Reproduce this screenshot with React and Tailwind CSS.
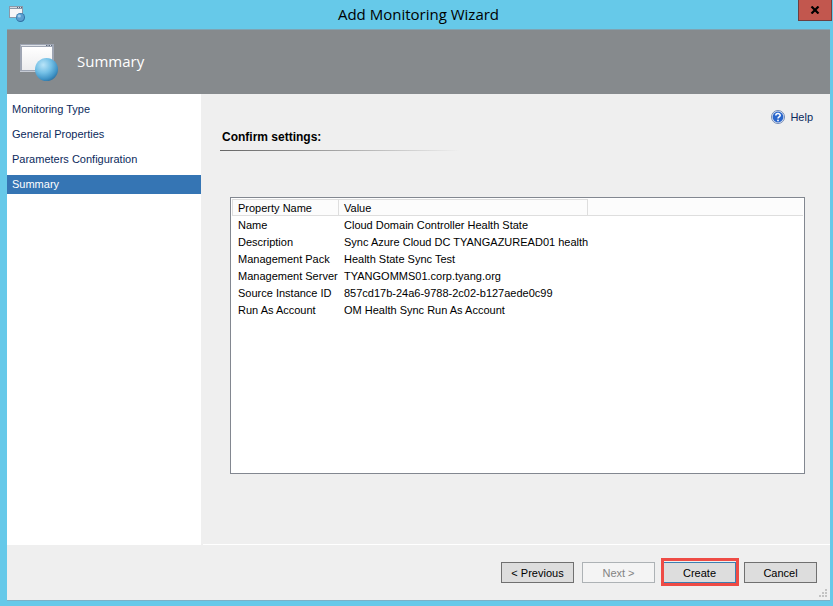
import React from "react";

const steps = ["Monitoring Type", "General Properties", "Parameters Configuration", "Summary"];

const settings = [
  ["Name", "Cloud Domain Controller Health State"],
  ["Description", "Sync Azure Cloud DC TYANGAZUREAD01 health"],
  ["Management Pack", "Health State Sync Test"],
  ["Management Server", "TYANGOMMS01.corp.tyang.org"],
  ["Source Instance ID", "857cd17b-24a6-9788-2c02-b127aede0c99"],
  ["Run As Account", "OM Health Sync Run As Account"],
];

function WizardIcon() {
  return (
    <svg viewBox="0 0 40 40" className="ml-[13px] size-10" aria-hidden="true">
      <defs>
        <linearGradient id="pane" x1="0" y1="0" x2="0" y2="1">
          <stop offset="0" stopColor="#ffffff" />
          <stop offset="1" stopColor="#ececee" />
        </linearGradient>
        <radialGradient id="globe" cx="0.36" cy="0.3" r="0.78">
          <stop offset="0" stopColor="#b9e4f8" />
          <stop offset="0.45" stopColor="#74c0e6" />
          <stop offset="0.8" stopColor="#3f93c6" />
          <stop offset="1" stopColor="#2a6c9c" />
        </radialGradient>
      </defs>
      <rect x="0" y="2" width="34" height="28" fill="#9ea5b3" />
      <rect x="1" y="3" width="32" height="1" fill="#dde1e7" />
      <path d="M26 3.500h1.500M28.500 3.500h1.500M31 3.500h1.500" stroke="#5e6a7c" strokeWidth="1" />
      <rect x="2" y="5" width="30" height="23" fill="url(#pane)" />
      <rect x="0" y="29" width="34" height="1" fill="#c5cad3" />
      <circle cx="26.500" cy="27.500" r="11.500" fill="url(#globe)" />
    </svg>
  );
}

function SmallWizardIcon() {
  return (
    <svg viewBox="0 0 16 16" className="mt-1.5 ml-0.5 size-4" aria-hidden="true">
      <rect x="0" y="0" width="14" height="12" fill="#8b98a8" />
      <rect x="1" y="1" width="12" height="1" fill="#d4dae1" />
      <path d="M8 1.500h1M10 1.500h1M12 1.500h1" stroke="#56647a" strokeWidth="1" />
      <rect x="1" y="3" width="12" height="8" fill="#f6f6f7" />
      <circle cx="11.500" cy="11.500" r="4.500" fill="#2f6fa3" />
      <circle cx="11.300" cy="11.300" r="3.700" fill="#5a9fd0" />
      <circle cx="10.300" cy="10" r="1.600" fill="#a3cfec" />
    </svg>
  );
}

function HelpIcon() {
  return (
    <svg viewBox="0 0 14 14" className="size-3.5" aria-hidden="true">
      <circle cx="7" cy="7" r="6.500" fill="#e4ebf5" stroke="#7189b5" />
      <circle cx="7" cy="7" r="5.400" fill="#2a66cc" />
      <path d="M4.800 5.600C4.800 3 9.200 3 9.200 5.300C9.200 6.900 7 6.800 7 8.500" fill="none" stroke="#fff" strokeWidth="1.500" />
      <circle cx="7" cy="10.400" r="0.900" fill="#fff" />
    </svg>
  );
}

function SizeGrip() {
  return (
    <svg viewBox="0 0 9 9" className="absolute right-0.5 bottom-0.5 size-[9px]" aria-hidden="true">
      <path d="M6 0h2v2h-2zM3 3h2v2h-2zM6 3h2v2h-2zM0 6h2v2h-2zM3 6h2v2h-2zM6 6h2v2h-2z" fill="#c3c3c3" />
    </svg>
  );
}

function WizardButton({ children, disabled, primary }) {
  const tone = disabled
    ? "border-[#adb2b5] bg-[#f4f4f4] text-[#838383]"
    : primary
      ? "border-[#3c7fb1] bg-[#dddddd] text-black"
      : "border-[#707070] bg-[#dddddd] text-black";
  return (
    <button type="button" disabled={disabled} className={`relative h-[21px] w-[73px] border pt-px text-[11px] leading-none ${tone}`}>
      {children}
      {primary && (
        <span className="pointer-events-none absolute -top-[5px] -right-1 -bottom-1 -left-[3px] border-3 border-[#ee4b45]" />
      )}
    </button>
  );
}

export default function App() {
  return (
    <div className="flex min-h-screen flex-col bg-[#66c9e9] pr-[3px] pb-[5px] pl-[7px] font-['Liberation_Sans',Arial,sans-serif] text-[11px] text-black">
      <header className="flex h-[29px] items-start">
        <SmallWizardIcon />
        <h1 className="flex-1 pl-3.5 text-center font-['Open_Sans','Noto_Sans',sans-serif] text-[15px] leading-[29px]">
          Add Monitoring Wizard
        </h1>
        <button
          type="button"
          aria-label="Close"
          className="-mr-0.5 flex h-[21px] w-[34px] items-center justify-center border border-t-0 border-[#6b3f40] bg-[#c2574e]"
        >
          <svg viewBox="0 0 10 8" className="h-2 w-2.5" aria-hidden="true">
            <path d="M1.500 0.500L8.500 7.500M8.500 0.500L1.500 7.500" stroke="#000" strokeWidth="2.200" />
          </svg>
        </button>
      </header>

      <div className="flex h-[65px] items-center border-t border-[#7fa3b2] bg-[#868a8d]">
        <WizardIcon />
        <h2 className="pb-0.5 pl-[17px] font-['Open_Sans','Noto_Sans',sans-serif] text-[15px] text-white">Summary</h2>
      </div>

      <div className="relative flex flex-1 flex-col border-b border-[#7eb0c5] bg-[#efefef]">
        <div className="flex flex-1">
          <nav className="flex w-[194px] flex-col gap-1.5 bg-white pt-1.5">
            {steps.map((step) => (
              <a
                key={step}
                href="#"
                aria-current={step === "Summary" ? "step" : undefined}
                className={`block h-[19px] pl-[5px] text-[11px] leading-[19px] ${
                  step === "Summary" ? "bg-[#3575b4] text-white" : "text-[#0b2a5c]"
                }`}
              >
                {step}
              </a>
            ))}
          </nav>

          <main className="ml-0.5 flex flex-1 flex-col border-b border-white pt-[15px] pr-[25px] pb-[70px] pl-[17px]">
            <div className="flex justify-end">
              <a href="#" className="-mr-2 flex items-center gap-[5px] text-[11px] leading-4 text-[#0b2a5c]">
                <HelpIcon />
                Help
              </a>
            </div>
            <h3 className="pl-0.5 text-xs leading-6 font-bold">Confirm settings:</h3>
            <div className="mt-px h-px w-60 bg-linear-to-r from-[#666] to-[#efefef]" />
            <div className="mt-[46px] ml-2.5 flex-1 border border-[#828790] bg-white p-px">
              <table className="w-full table-fixed border-separate border-spacing-0 text-left text-[11px] leading-[14px]">
                <colgroup>
                  <col className="w-[106px]" />
                  <col className="w-[250px]" />
                  <col />
                </colgroup>
                <thead>
                  <tr className="h-[17px] bg-[#fcfcfc]">
                    <th className="border-y border-l border-[#dedede] p-0 pt-px pl-[5px] font-normal">Property Name</th>
                    <th className="border border-[#dedede] p-0 pt-px pl-[5px] font-normal">Value</th>
                    <td className="border-b border-[#dedede] p-0" />
                  </tr>
                </thead>
                <tbody>
                  {settings.map(([name, value]) => (
                    <tr key={name} className="h-[17px] whitespace-nowrap">
                      <td className="p-0 pl-1.5">{name}</td>
                      <td className="p-0 pl-1.5">{value}</td>
                      <td className="p-0" />
                    </tr>
                  ))}
                </tbody>
              </table>
            </div>
          </main>
        </div>

        <footer className="flex h-[55px] justify-end gap-2 pt-[17px] pr-[13px]">
          <WizardButton>&lt; Previous</WizardButton>
          <WizardButton disabled>Next &gt;</WizardButton>
          <WizardButton primary>Create</WizardButton>
          <WizardButton>Cancel</WizardButton>
        </footer>
        <SizeGrip />
      </div>
    </div>
  );
}
